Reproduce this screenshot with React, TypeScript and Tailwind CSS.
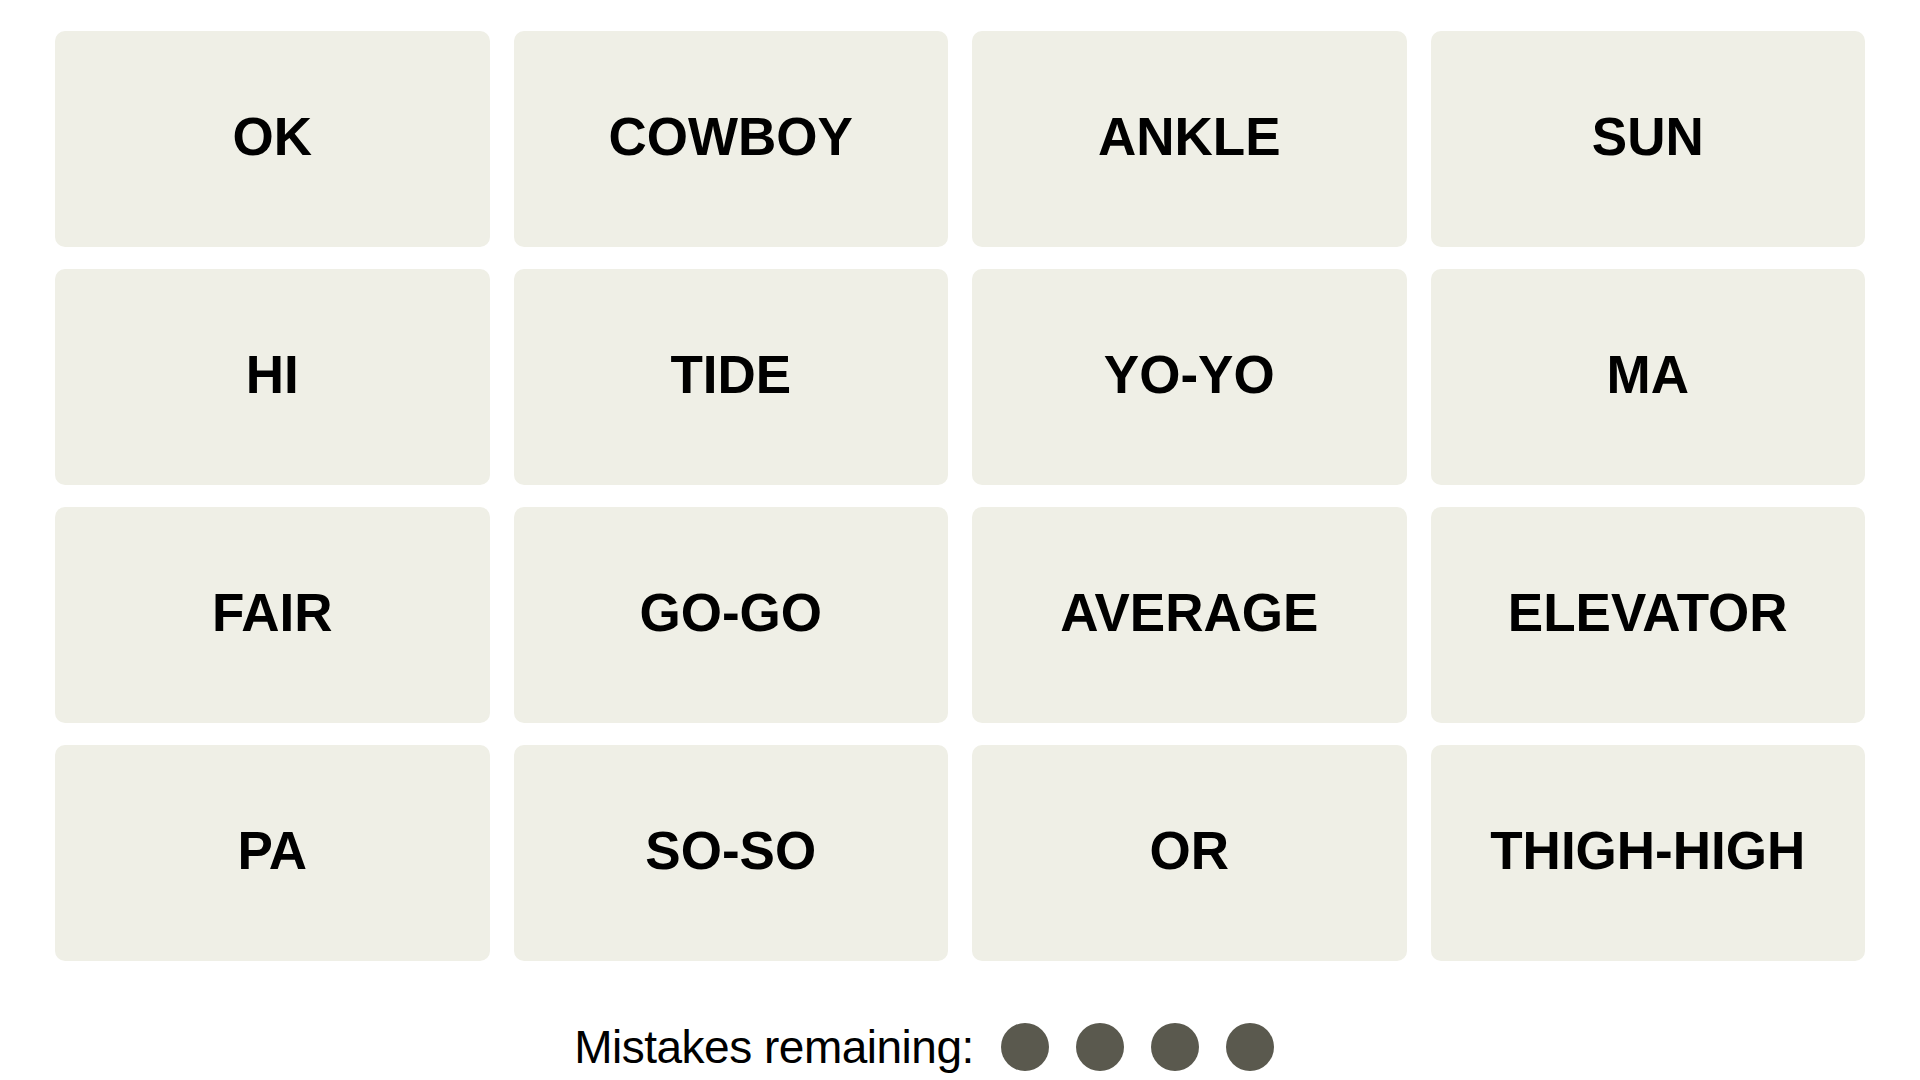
import React from 'react';

const WORDS = [
  'OK', 'COWBOY', 'ANKLE', 'SUN',
  'HI', 'TIDE', 'YO-YO', 'MA',
  'FAIR', 'GO-GO', 'AVERAGE', 'ELEVATOR',
  'PA', 'SO-SO', 'OR', 'THIGH-HIGH',
];

function Tile({ word }: { word: string }) {
  return (
    <div className="flex h-[216px] items-center justify-center rounded-[10px] bg-[#efefe6] pb-[5px]">
      <span className="text-[53px] font-bold leading-none text-black">{word}</span>
    </div>
  );
}

export default function App() {
  return (
    <div
      className="h-[1080px] w-full overflow-hidden bg-white"
      style={{ fontFamily: '"Liberation Sans", Arial, sans-serif' }}
    >
      <div className="mx-auto w-[1810px] pt-[31px]">
        {/* Word grid */}
        <div className="grid grid-cols-4 gap-x-[24px] gap-y-[22px]">
          {WORDS.map((w) => (
            <Tile key={w} word={w} />
          ))}
        </div>

        {/* Mistakes remaining */}
        <div className="mt-[62px] flex items-center justify-center pr-[72px]">
          <span className="text-[46px] leading-none tracking-[-0.5px] text-black">Mistakes remaining:</span>
          <div className="ml-[27px] flex gap-[27px]">
            {[0, 1, 2, 3].map((i) => (
              <span key={i} className="h-[48px] w-[48px] rounded-full bg-[#5a594e]" />
            ))}
          </div>
        </div>
      </div>
    </div>
  );
}
